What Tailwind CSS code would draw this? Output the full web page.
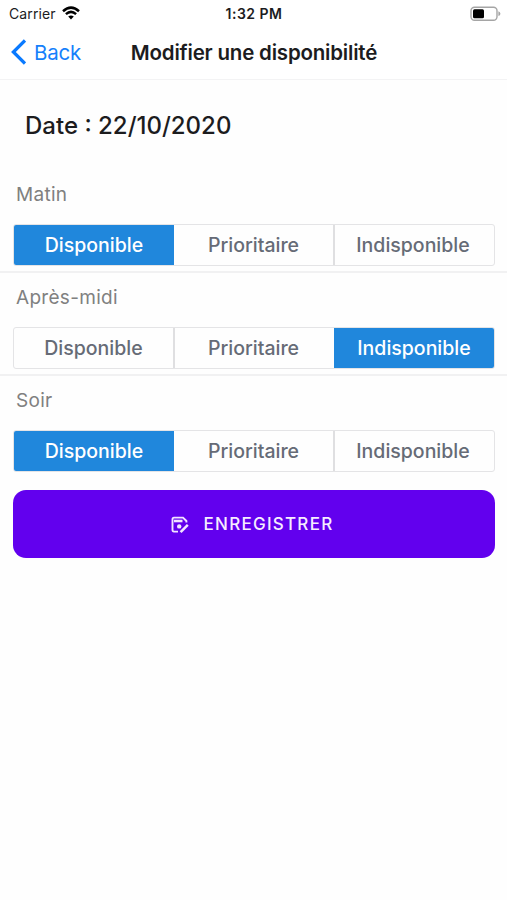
<!DOCTYPE html>
<html lang="fr">
<head>
<meta charset="utf-8">
<title>Modifier une disponibilité</title>
<script src="https://cdn.jsdelivr.net/npm/@tailwindcss/browser@4"></script>
</head>
<body class="bg-white font-['Inter',sans-serif] text-[#1c1c1e]">
<div class="w-[507px] h-[900px] overflow-hidden bg-[#fefefe]">
  <header class="h-[80px] border-b border-[#f3f3f4] bg-white">
    <div class="grid grid-cols-3 h-7 items-center pl-[9px] pr-[6px] text-[14px] leading-7">
      <div class="flex items-center gap-[6px]">
        <span class="tracking-[0.1px]">Carrier</span>
        <svg class="-mt-[2px]" width="18" height="14" viewBox="0 0 18 14" fill="none" stroke="#000" stroke-width="2.5"><path d="M1 5.2Q9-1.9 17 5.2M3.9 8.1Q9 3.7 14.1 8.1"/><path d="M6.2 10.5Q9 8.3 11.8 10.5L9 13.4Z" fill="#000" stroke="none"/></svg>
      </div>
      <span class="text-center font-semibold text-[14px] tracking-[0.5px] -ml-[2px]">1:32 PM</span>
      <svg class="justify-self-end" width="31" height="16" viewBox="0 0 31 16"><rect x="1" y="1.2" width="26" height="13" rx="3.5" fill="#fff" stroke="#a5a5a5" stroke-width="1.4"/><rect x="3" y="3.2" width="11" height="9" rx="1.5" fill="#000"/><path d="M28.4 5.3q2 .8 2 2.4t-2 2.4z" fill="#a5a5a5"/></svg>
    </div>
    <div class="grid grid-cols-[122px_264px_121px] h-[50px] items-center">
      <div class="flex items-center gap-[8px] pl-[11px] text-[#1580fb] text-[20.5px]">
        <svg class="-mt-[2px]" width="15" height="26" viewBox="0 0 15 26" fill="none" stroke="#0a7aff" stroke-width="3.3"><path d="M14 1.5L2.4 13L14 24.5"/></svg>
        <span class="tracking-[-0.2px]">Back</span>
      </div>
      <h1 class="mt-px text-center font-semibold text-[20.5px] tracking-[-0.2px] whitespace-nowrap">Modifier une disponibilité</h1>
    </div>
  </header>
  <main>
    <h2 class="h-[90px] pl-[25px] leading-[91px] text-[24px] font-medium">Date : 22/10/2020</h2>
    <section class="h-[103px] border-b-2 border-[#f1f1f2] pt-[10px]">
      <h3 class="h-[30px] pl-4 leading-[30px] text-[19px] tracking-[0.3px] text-[#808080]">Matin</h3>
      <div class="mt-[14px] mx-[13px] w-[482px] h-[42px] grid grid-cols-[160px_159px_161px] border border-[#e4e4e6] rounded-[3px] overflow-hidden text-center text-[19.5px] leading-[41px] font-medium text-[#666b76]">
        <span class="bg-[#2087dc] text-white">Disponible</span><span>Prioritaire</span><span class="border-l-2 border-[#dfdfe1] pr-[3px]">Indisponible</span>
      </div>
    </section>
    <section class="h-[103px] border-b-2 border-[#f1f1f2] pt-[10px]">
      <h3 class="h-[30px] pl-4 leading-[30px] text-[19px] tracking-[0.3px] text-[#808080]">Après-midi</h3>
      <div class="mt-[14px] mx-[13px] w-[482px] h-[42px] grid grid-cols-[161px_159px_160px] border border-[#e4e4e6] rounded-[3px] overflow-hidden text-center text-[19.5px] leading-[41px] font-medium text-[#666b76]">
        <span class="border-r-2 border-[#dfdfe1]">Disponible</span><span class="pr-[2px]">Prioritaire</span><span class="bg-[#2087dc] text-white">Indisponible</span>
      </div>
    </section>
    <section class="h-[103px] pt-[10px]">
      <h3 class="h-[30px] pl-4 leading-[30px] text-[19px] tracking-[0.3px] text-[#808080]">Soir</h3>
      <div class="mt-[14px] mx-[13px] w-[482px] h-[42px] grid grid-cols-[160px_159px_161px] border border-[#e4e4e6] rounded-[3px] overflow-hidden text-center text-[19.5px] leading-[41px] font-medium text-[#666b76]">
        <span class="bg-[#2087dc] text-white">Disponible</span><span>Prioritaire</span><span class="border-l-2 border-[#dfdfe1] pr-[3px]">Indisponible</span>
      </div>
    </section>
    <button class="mt-[11px] ml-[13px] w-[482px] h-[68px] rounded-[13px] bg-[#6200ee] text-[#f6edff] flex items-center justify-center gap-[15px] pr-[4px] pt-px text-[17px] font-medium tracking-[1.25px]">
      <svg width="18" height="18" viewBox="0 0 18 18" fill="none" stroke="#f2e4ff" stroke-width="1.9"><path d="M7 15.6H3Q1.5 15.6 1.5 14V3.2Q1.5 1.6 3 1.6H12L15.4 5V6.5"/><path d="M3 5H11.5" stroke-width="2.6"/><circle cx="8.2" cy="10.4" r="2.2" fill="#f2e4ff" stroke="none"/><path d="M9.6 16.2L16.8 8.8" stroke-width="2.5"/></svg>
      <span>ENREGISTRER</span>
    </button>
  </main>
</div>
</body>
</html>
